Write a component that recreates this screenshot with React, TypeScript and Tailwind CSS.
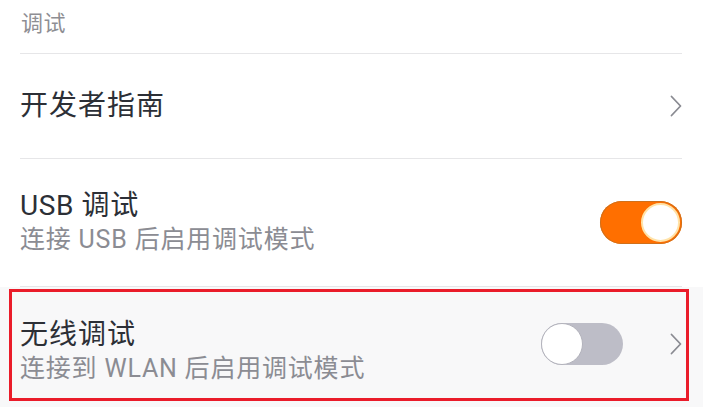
import React from "react";

function Chevron() {
  return (
    <svg width="12" height="22" viewBox="0 0 12 22" fill="none" className="shrink-0">
      <path d="M1.5 1.5 L10.5 11 L1.5 20.5" stroke="#8a8b92" strokeWidth="1.8" strokeLinecap="round" strokeLinejoin="round" />
    </svg>
  );
}

function ToggleOn() {
  return (
    <div className="w-[82px] h-[43px] rounded-full bg-[#ff6f00] flex items-center justify-end pr-[2px] shadow-[inset_0_0_0_1px_#d0701a]">
      <div className="w-[39px] h-[39px] rounded-full bg-white border-2 border-[#ffe3a8]" />
    </div>
  );
}

function ToggleOff() {
  return (
    <div className="w-[82px] h-[42px] rounded-full bg-[#bdbdc7] flex items-center justify-start">
      <div className="w-[42px] h-[42px] rounded-full bg-white border border-[#b3b3bc]" />
    </div>
  );
}

export default function App() {
  return (
    <div
      className="w-[703px] h-[407px] bg-white overflow-hidden relative"
      style={{ fontFamily: 'Roboto, "Noto Sans CJK SC", sans-serif' }}
    >
      <div className="h-[53px] pl-[21px] pt-[10px]">
        <span className="text-[22px] leading-[28px] tracking-[0.5px] text-[#8e8e93]">调试</span>
      </div>
      <div className="ml-[20px] mr-[21px] h-px bg-[#e6e6e8]" />

      <div className="h-[104px] flex items-center justify-between pl-[20px] pr-[21px]">
        <span className="text-[28px] leading-[34px] tracking-[1px] text-[#2c2f36]">开发者指南</span>
        <Chevron />
      </div>
      <div className="ml-[20px] mr-[21px] h-px bg-[#e6e6e8]" />

      <div className="h-[127px] flex items-center justify-between pl-[20px] pr-[21px]">
        <div className="flex flex-col">
          <span className="text-[28px] leading-[34px] tracking-[0.6px] text-[#2c2f36]">USB 调试</span>
          <span className="text-[25px] leading-[33px] tracking-[0.8px] text-[#8b8c93]">连接 USB 后启用调试模式</span>
        </div>
        <ToggleOn />
      </div>
      <div className="ml-[20px] mr-[21px] h-px bg-[#e6e6e8]" />

      <div className="h-[130px] bg-[#f8f8f9] flex items-center justify-between pl-[20px] pr-[21px]">
        <div className="flex flex-col">
          <span className="text-[28px] leading-[34px] tracking-[1px] text-[#2c2f36]">无线调试</span>
          <span className="text-[25px] leading-[34px] tracking-[0.8px] text-[#8b8c93]">连接到 WLAN 后启用调试模式</span>
        </div>
        <div className="flex items-center gap-[47px] pb-[16px]">
          <ToggleOff />
          <Chevron />
        </div>
      </div>

      <div className="absolute left-[9px] top-[289px] w-[680px] h-[112px] border-[3px] border-[#ea1c2a] pointer-events-none" />
    </div>
  );
}
